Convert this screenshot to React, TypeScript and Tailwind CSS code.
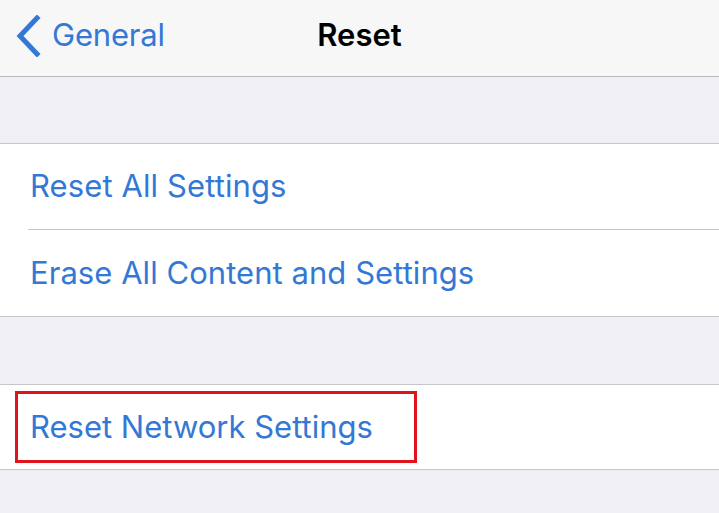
export default function App() {
  const font = { fontFamily: 'Inter, "Open Sans", sans-serif' }

  return (
    <div className="w-[719px] h-[513px] overflow-hidden bg-[#efeff4]" style={font}>
      {/* Nav bar */}
      <div className="relative h-[77px] bg-[#f7f7f8] border-b border-[#b9b9bd] flex items-center">
        <div className="flex items-center pl-[15px] gap-[11px] text-[#3478d6]">
          <svg width="26" height="42" viewBox="0 0 26 42" fill="none" className="mt-[-4px]">
            <path d="M22 3 L5 21 L22 39" stroke="currentColor" strokeWidth="5" strokeLinecap="square" strokeLinejoin="miter" />
          </svg>
          <span className="text-[31px] tracking-[-0.2px] mt-[-6px]">General</span>
        </div>
        <span className="absolute left-1/2 -translate-x-1/2 top-[12px] text-[31px] font-semibold text-black">Reset</span>
      </div>

      <div className="h-[66px]" />

      {/* Group 1 */}
      <div className="bg-white border-y border-[#c8c7cc]">
        <div className="h-[85px] flex items-center pl-[30px] text-[31px] text-[#3478d6] tracking-[0.1px]">
          Reset All Settings
        </div>
        <div className="ml-[28px] border-t border-[#c8c7cc]" />
        <div className="h-[86px] flex items-center pl-[30px] text-[31px] text-[#3478d6] tracking-[0.05px]">
          Erase All Content and Settings
        </div>
      </div>

      <div className="h-[67px]" />

      {/* Group 2 */}
      <div className="bg-white border-y border-[#c8c7cc]">
        <div className="relative h-[84px] flex items-center pl-[30px] text-[31px] text-[#3478d6]">
          Reset Network Settings
          <div className="absolute left-[15px] top-[6px] w-[402px] h-[72px] border-[3px] border-[#e0121a]" />
        </div>
      </div>
    </div>
  )
}
